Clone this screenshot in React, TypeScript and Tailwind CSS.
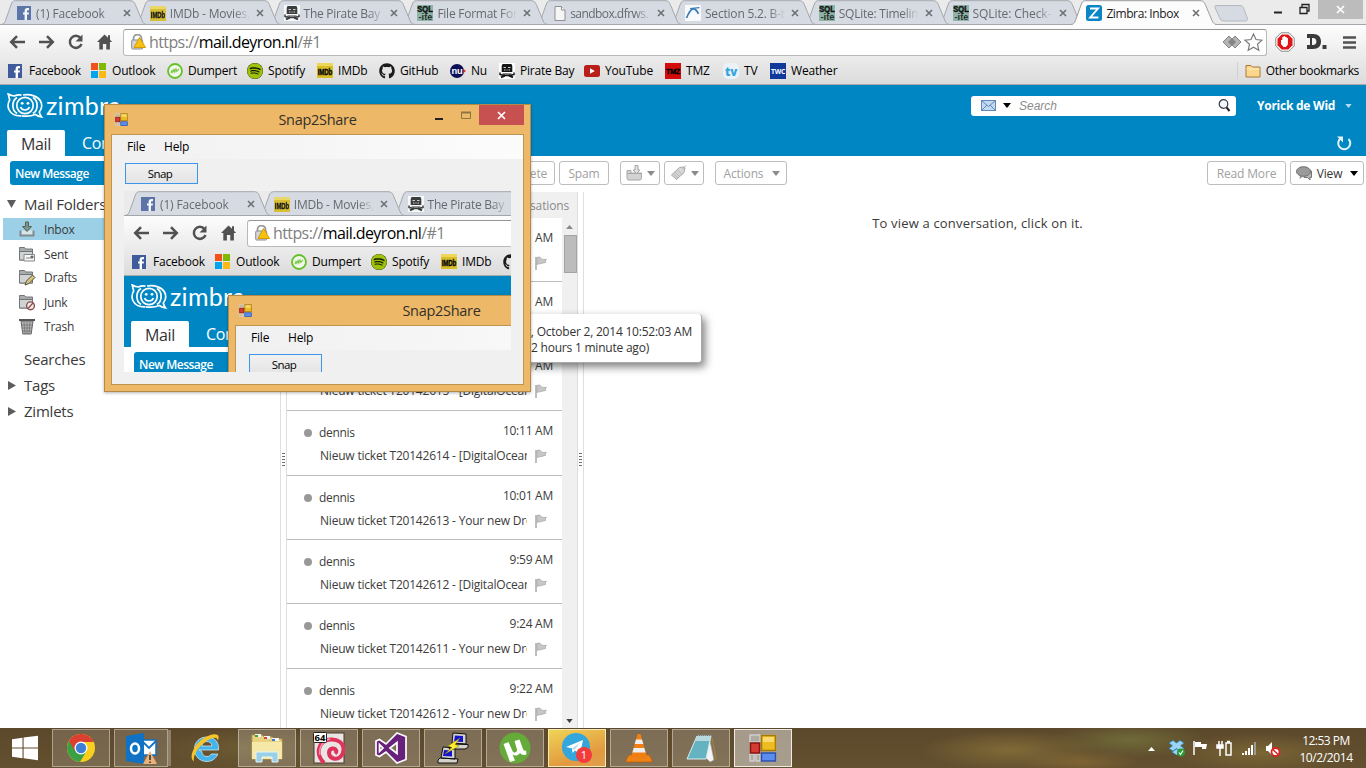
import React from "react";
import { FaGithub, FaSpotify } from "react-icons/fa";

type P = { className?: string };

const FacebookIcon = ({ className = "" }: P) => (
  <svg width="14" height="14" viewBox="0 0 14 14" className={className}>
    <rect width="14" height="14" fill="#3f5b9b" />
    <path d="M7.600 14V8.600H6V6.400h1.600V5c0-2 1-3 2.900-3h1.500v2.200H11c-.8 0-1 .3-1 1v1.200h2l-.3 2.200H10V14z" fill="#fff" />
  </svg>
);
const ImdbIcon = ({ className = "" }: P) => (
  <svg width="16" height="15" viewBox="0 0 16 15" className={className}>
    <rect width="16" height="15" fill="#d9bd24" />
    <rect width="16" height="3" fill="#ecd75a" />
    <text x="8" y="11.500" fontSize="8.500" fontWeight="900" textAnchor="middle" textLength="14.500" lengthAdjust="spacingAndGlyphs" fontFamily="Liberation Sans, sans-serif" stroke="#111" strokeWidth=".4">IMDb</text>
  </svg>
);
const PirateIcon = ({ className = "" }: P) => (
  <svg width="16" height="16" viewBox="0 0 16 16" className={className}>
    <rect width="16" height="16" fill="#fff" />
    <path d="M3.500 1h9l.8 2v6H2.700V3z" fill="#151515" />
    <path d="M4.500 4.500H7M9 4.500h2.500M5 7h1.500M7.500 7h1M9.500 7H11" stroke="#ccc" />
    <path d="M1 9.500v2c4 1.200 10 1.200 14 0v-2" stroke="#151515" strokeWidth="1.500" fill="none" />
    <path d="M3.500 10.500h9v1h-9z" fill="#151515" />
    <path d="M2 14.300l4-1.800M14 14.300l-4-1.800" stroke="#151515" strokeWidth="2" />
  </svg>
);
const SqliteIcon = () => (
  <svg width="16" height="16" viewBox="0 0 16 16">
    <rect width="16" height="16" fill="#8fb3a7" />
    <text x="8" y="7.300" fontSize="9" fontWeight="700" textAnchor="middle" textLength="15.500" lengthAdjust="spacingAndGlyphs" fontFamily="Liberation Sans, sans-serif" fill="#101412" stroke="#101412" strokeWidth=".5">SQL</text>
    <text x="8.500" y="15" fontSize="9.500" fontWeight="700" textAnchor="middle" textLength="14" lengthAdjust="spacingAndGlyphs" fontFamily="Liberation Sans, sans-serif" fill="#29342f">-ite</text>
  </svg>
);
const PageIcon = () => (
  <svg width="12" height="15" viewBox="0 0 12 15">
    <path d="M1 .5h6.500L11 4v10.500H1z" fill="#f5f5f5" stroke="#8d9095" />
    <path d="M7.500.5V4H11" fill="#fff" stroke="#8d9095" />
  </svg>
);
const SectionIcon = () => (
  <svg width="16" height="16" viewBox="0 0 16 16">
    <rect width="16" height="16" fill="#f7f9fb" />
    <path d="M1.500 13C3.500 8 5.500 3.800 8.500 3.800c2.500 0 3.500 2 5 5" fill="none" stroke="#3579b8" strokeWidth="1.700" />
    <path d="M5 3.500l9.500-.8" stroke="#3579b8" strokeWidth="1.200" />
  </svg>
);
const ZIcon = () => (
  <svg width="16" height="16" viewBox="0 0 16 16">
    <rect width="16" height="16" rx="2.500" fill="#0a86c5" />
    <path d="M4 3.500h8L4.200 12.500H12.400" stroke="#fff" strokeWidth="1.900" fill="none" />
  </svg>
);
const OutlookWin = () => (
  <svg width="15" height="15" viewBox="0 0 15 15">
    <path fill="#f2511b" d="M0 0h7v7H0z" /><path fill="#7fba00" d="M8 0h7v7H8z" />
    <path fill="#00a3ee" d="M0 8h7v7H0z" /><path fill="#fcb813" d="M8 8h7v7H8z" />
  </svg>
);
const DumpertIcon = () => (
  <svg width="16" height="16" viewBox="0 0 16 16">
    <circle cx="8" cy="8" r="7" fill="#f3f8ec" stroke="#66c02b" strokeWidth="1.800" />
    <path d="M4 10l1-2.500.8 1.800L7 6.500l.8 2.500L9 6l.8 2.400L12 5.800" fill="none" stroke="#7cc94a" strokeWidth="1.200" />
  </svg>
);
const SpotifyIcon = () => (
  <span className="relative flex size-4 items-center justify-center rounded-full bg-[#1a1a0a]">
    <FaSpotify size={16} color="#9cc30a" />
  </span>
);
const NuIcon = () => (
  <svg width="16" height="14" viewBox="0 0 16 14">
    <circle cx="7" cy="7" r="7" fill="#0d0f57" />
    <path d="M13.500 5l2.500 2-2.500 2z" fill="#e02b2b" />
    <text x="7" y="9.600" fontSize="8.500" fontWeight="700" textAnchor="middle" textLength="11" lengthAdjust="spacingAndGlyphs" fontFamily="Liberation Sans, sans-serif" fill="#fff">nu</text>
  </svg>
);
const YoutubeIcon = () => (
  <svg width="16" height="12" viewBox="0 0 16 12">
    <rect width="16" height="12" rx="2.500" fill="#b81f1a" />
    <path d="M6 3.300v5.400L10.800 6z" fill="#fff" />
  </svg>
);
const TmzIcon = () => (
  <svg width="16" height="16" viewBox="0 0 16 16">
    <rect width="16" height="16" fill="#d40b0b" />
    <text x="8" y="11" fontSize="7.500" fontWeight="900" textAnchor="middle" textLength="14" lengthAdjust="spacingAndGlyphs" fontFamily="Liberation Sans, sans-serif" stroke="#000" strokeWidth=".4">TMZ</text>
  </svg>
);
const TvIcon = () => (
  <svg width="16" height="16" viewBox="0 0 16 16">
    <rect width="16" height="16" rx="5" fill="#e9f2f7" />
    <text x="8" y="12.500" fontSize="12" fontWeight="800" textAnchor="middle" textLength="12" lengthAdjust="spacingAndGlyphs" fontFamily="Open Sans, sans-serif" fill="#35a3dc">tv</text>
  </svg>
);
const TwcIcon = () => (
  <svg width="16" height="16" viewBox="0 0 16 16">
    <rect width="16" height="16" fill="#11399c" />
    <text x="8" y="10.500" fontSize="7" fontWeight="700" textAnchor="middle" textLength="14" lengthAdjust="spacingAndGlyphs" fontFamily="Open Sans, sans-serif" fill="#fff">TWC</text>
  </svg>
);

const TabClose = () => (
  <svg width="8" height="8" viewBox="0 0 8 8"><path d="M1 1l6 6M7 1L1 7" stroke="#6d6f73" strokeWidth="1.600" /></svg>
);

type TabDef = { icon: React.ReactNode; title: string; active?: boolean; pad: string; label: string };
const TABS: TabDef[] = [
  { icon: <FacebookIcon className="opacity-80" />, title: "(1) Facebook", pad: "pl-[16px]", label: "tracking-[-0.15px]" },
  { icon: <ImdbIcon className="opacity-90" />, title: "IMDb - Movies,", pad: "pl-[15px]", label: "tracking-[-0.2px] pl-[1px]" },
  { icon: <PirateIcon className="opacity-80" />, title: "The Pirate Bay", pad: "pl-[15px]", label: "tracking-[-0.28px] pl-[1px]" },
  { icon: <SqliteIcon />, title: "File Format For", pad: "pl-[15px]", label: "tracking-[-0.25px] pl-[1px]" },
  { icon: <PageIcon />, title: "sandbox.dfrws.", pad: "pl-[18px]", label: "tracking-[-0.55px] -ml-[3px]" },
  { icon: <SectionIcon />, title: "Section 5.2. B-t", pad: "pl-[15px]", label: "tracking-[-0.2px] pl-[1px]" },
  { icon: <SqliteIcon />, title: "SQLite: Timelin", pad: "pl-[15px]", label: "tracking-[-0.25px] pl-[1px]" },
  { icon: <SqliteIcon />, title: "SQLite: Check-", pad: "pl-[15px]", label: "tracking-[-0.1px] pl-[1px]" },
  { icon: <ZIcon />, title: "Zimbra: Inbox", active: true, pad: "pl-[15px]", label: "tracking-[-0.4px] pl-[1px]" },
];
const Z = ["z-[9]", "z-[8]", "z-[7]", "z-[6]", "z-[5]", "z-[4]", "z-[3]", "z-[2]", "z-10"];

function Tab({ t, z }: { t: TabDef; z: string }) {
  return (
    <div className={`relative flex h-[25px] w-[133.8px] shrink-0 items-center pt-[1px] ${t.pad} ${z}`}>
      <svg className="absolute left-0 top-0" width="149" height="25" viewBox="0 0 149 25">
        <path
          d="M0 24.500C3 24 3.500 23 4.500 20.500L10 5C11.200 1.800 12 .7 14.500.7H129C132 .7 133 1.800 134.300 4.500L141 20.500C142 23 143 24.300 146 24.500"
          fill={t.active ? "#fcfcfc" : "#d6dbe3"}
          stroke={t.active ? "#9a9ca0" : "#a3a7ad"}
        />
        {!t.active && <path d="M0 24.500H149" stroke="#a3a6ab" />}
        {t.active && <path d="M2 24.500H144" stroke="#fcfcfc" strokeWidth="1.500" />}
      </svg>
      <span className="relative z-10 flex w-[19px] shrink-0">{t.icon}</span>
      <span
        className={`relative z-10 w-[83px] shrink-0 overflow-hidden whitespace-nowrap text-[12px] ${t.label} ${
          t.active ? "text-[#1a1a1a]" : "text-[#66696f] [mask-image:linear-gradient(to_right,#000_78%,transparent_98%)]"
        }`}
      >
        {t.title}
      </span>
      <span className="relative z-10 ml-[4px]"><TabClose /></span>
    </div>
  );
}

const BOOKMARKS: { icon: React.ReactNode; label: string; w: string }[] = [
  { icon: <FacebookIcon />, label: "Facebook", w: "w-[83px]" },
  { icon: <OutlookWin />, label: "Outlook", w: "w-[76px]" },
  { icon: <DumpertIcon />, label: "Dumpert", w: "w-[80px]" },
  { icon: <SpotifyIcon />, label: "Spotify", w: "w-[70px]" },
  { icon: <ImdbIcon />, label: "IMDb", w: "w-[62px]" },
  { icon: <FaGithub size={16} color="#1b1b1b" />, label: "GitHub", w: "w-[71px]" },
  { icon: <NuIcon />, label: "Nu", w: "w-[49px]" },
  { icon: <PirateIcon />, label: "Pirate Bay", w: "w-[85px]" },
  { icon: <YoutubeIcon />, label: "YouTube", w: "w-[81px]" },
  { icon: <TmzIcon />, label: "TMZ", w: "w-[58px]" },
  { icon: <TvIcon />, label: "TV", w: "w-[47px]" },
  { icon: <TwcIcon />, label: "Weather", w: "w-[90px]" },
];

function Chrome({ nested }: { nested: boolean }) {
  const tabs = nested ? TABS.slice(0, 3) : TABS;
  const marks = nested ? BOOKMARKS.slice(0, 6) : BOOKMARKS;
  return (
    <div className="flex h-[85px] flex-col border-b border-[#a9a9a9] bg-[linear-gradient(#fdfdfd_25px,#dcdcdc_84px)]">
      <div className="relative flex h-[25px] bg-[#ebebeb] pl-[1px] shadow-[inset_0_-1px_0_#a3a6ab]">
        {tabs.map((t, i) => <Tab key={i} t={t} z={Z[i]} />)}
        {!nested && (
          <>
            <svg className="ml-[9px] mt-[5px] shrink-0" width="34" height="17" viewBox="0 0 34 17">
              <path d="M2 .5h24c2 0 3 1 3.800 3l3.400 9.500c.8 2.200 0 3-2 3H10c-2.500 0-3.500-1-4.500-3.500L1.200 3C.5 1.200.8.5 2 .5z" fill="#d6dbe3" stroke="#b3b8bf" />
            </svg>
            <svg className="ml-auto mt-[3px] shrink-0" width="38" height="14" viewBox="0 0 38 14">
              <path d="M1 9.500h8" stroke="#222" strokeWidth="2" />
              <path d="M27 4.500h7v6h-7zM29 4V1.500h7V8h-2" fill="none" stroke="#222" strokeWidth="1.300" />
            </svg>
            <div className="ml-[7px] mr-[3px] flex h-[19px] w-[45px] shrink-0 items-center justify-center bg-[#bcbcbc]">
              <svg width="9" height="9" viewBox="0 0 9 9"><path d="M1 1l7 7M8 1L1 8" stroke="#fff" strokeWidth="1.700" /></svg>
            </div>
          </>
        )}
      </div>
      <div className="flex h-[32px] items-center">
        <svg className="ml-[8px] mt-[2px] shrink-0" width="106" height="18" viewBox="0 0 106 18">
          <g fill="none" stroke="#515151" strokeWidth="2.500">
            <path d="M17 9H4M9 3.200L3.200 9 9 14.800" />
            <path d="M31 9h13M39 3.200L44.800 9 39 14.800" />
            <path d="M72.500 5A6 6 0 1 0 73.500 11" />
          </g>
          <path d="M74.500 1.500v7h-7z" fill="#515151" />
          <path d="M96.500 1.500L89 9h2.300v7.500h3.600V11h3.400v5.500h3.600V9h2.300l-2.200-2.300V2.200h-2v2.500z" fill="#515151" />
        </svg>
        <div className="ml-[9px] mt-[2px] flex h-[27px] w-[1144px] items-center rounded-[3px] border border-[#b9b9b9] border-t-[#959595] bg-white">
          <svg className="ml-[7px] shrink-0" width="15" height="16" viewBox="0 0 15 16">
            <path d="M2.500 7V4.500a4 4 0 0 1 8 0V7" fill="none" stroke="#9b9b9b" strokeWidth="1.800" />
            <rect x=".7" y="6" width="11" height="9" rx="1" fill="#d5d5d5" stroke="#8d8d8d" />
            <path d="M8.500 3.500L14.500 13.500H3z" fill="#f6c20f" stroke="#d69a08" strokeLinejoin="round" />
          </svg>
          <span className="ml-[3px] whitespace-nowrap text-[16px] leading-none tracking-[-0.6px] text-[#808080]">
            https://<span className="text-black">mail.deyron.nl</span>/#1
          </span>
          {!nested && (
            <svg className="ml-auto mr-[3px] shrink-0" width="41" height="20" viewBox="0 0 41 20">
              <path d="M7 4L1 10l6 6 6-6zM13 4l6 6-6 6-6-6z" fill="#b4b4b4" stroke="#858585" />
              <path d="M10 6l4 4-4 4-4-4z" fill="#858585" />
              <path d="M31.500 2l2.500 5.500 6 .7-4.500 4 1.300 6-5.300-3-5.300 3 1.300-6-4.500-4 6-.7z" fill="#fff" stroke="#7b7b7b" strokeWidth="1.200" />
            </svg>
          )}
        </div>
        {!nested && (
          <div className="mt-[2px] flex items-center">
            <svg className="ml-[8px]" width="20" height="20" viewBox="0 0 20 20">
              <path d="M6 .8h8L19.200 6v8L14 19.200H6L.8 14V6z" fill="#fff" stroke="#888" />
              <path d="M6.700 2.500h6.600l4.200 4.200v6.600l-4.200 4.200H6.700l-4.200-4.200V6.700z" fill="#e01518" />
              <path d="M6 8h1.300V5h1.400V4h1.500v1h1.400v1h1.300v6.500l-2 2.500H8.500L6 12z" fill="#fff" />
            </svg>
            <svg className="ml-[12px]" width="20" height="16" viewBox="0 0 20 16">
              <path d="M0 0h6c5.500 0 8 3 8 7.500S11.500 15 6 15H0V11h3V4H0zM5 4v7h1c2 0 3.400-1 3.400-3.500S8 4 6 4z" fill="#3a3a3a" fillRule="evenodd" />
              <path d="M15.500 11h4v4h-4z" fill="#3a3a3a" />
            </svg>
            <svg className="ml-[16px]" width="13" height="13" viewBox="0 0 13 13">
              <path d="M0 1.500h13M0 6.500h13M0 11.500h13" stroke="#515151" strokeWidth="2.600" />
            </svg>
          </div>
        )}
      </div>
      <div className="flex h-[27px] items-center pl-[8px] text-[12px] tracking-[-0.2px] text-black">
        {marks.map((b, i) => (
          <div key={i} className={`flex shrink-0 items-center ${b.w}`}>
            <span className="flex w-[21px]">{b.icon}</span>
            <span className="whitespace-nowrap">{b.label}</span>
          </div>
        ))}
        {!nested && (
          <div className="ml-auto flex items-center border-l border-[#cdd0d3] pl-[7px] pr-[7px]">
            <svg width="16" height="14" viewBox="0 0 16 14">
              <path d="M1 3V1.500h5L7.500 3H15v10H1z" fill="#fbd78e" stroke="#a8793a" />
              <path d="M1.500 5h13" stroke="#fdebbf" />
            </svg>
            <span className="ml-[5px] whitespace-nowrap tracking-[-0.35px]">Other bookmarks</span>
          </div>
        )}
      </div>
    </div>
  );
}

const ZimbraLogo = () => (
  <svg width="37" height="26" viewBox="0 0 37 26" fill="none" stroke="#fff" strokeWidth="1.700">
    <circle cx="18" cy="12.500" r="8.200" />
    <path d="M14.500 2.200C12 1.600 9.500 2 7.500 3 5.500 2.800 3 2 1.200.9c.8 2.400.8 4 1.500 6-1.800 3-2.200 6.300-.8 9.600 2 4.300 6.500 6.600 12.500 6.300" />
    <path d="M16 2C24 .8 31 3.500 33.500 8c2 4 1.300 8-1.200 11 .4 1.800 1 3.500 2.200 5-2.700-.3-4.500-1.200-6.200-2.500-4 1.700-8.500 2-13.500 1.300" />
    <path d="M10 4.500C4.500 8 4.500 17 10 20.500M26 4.500c5.500 3.500 5.500 12.500 0 16" />
    <circle cx="15.200" cy="10.300" r="1.400" fill="#fff" stroke="none" /><circle cx="21" cy="10.300" r="1.400" fill="#fff" stroke="none" />
    <path d="M13.500 14c1.500 4 7.500 4 9 0" />
  </svg>
);

const Caret = ({ className = "" }: P) => (
  <svg className={className} width="8" height="5" viewBox="0 0 8 5"><path d="M0 0h8L4 5z" fill="currentColor" /></svg>
);

function Header({ nested }: { nested: boolean }) {
  return (
    <div className="flex h-[71px] flex-col justify-between bg-[#0087c3] text-white">
      <div className="flex h-[41px] items-center">
        <div className="ml-[7px]"><ZimbraLogo /></div>
        <span className="-mt-[1px] ml-[2px] font-['Lato',sans-serif] text-[25px] leading-none tracking-[0.3px]">zimbra</span>
        {!nested && (
          <>
            <div className="ml-auto flex h-[20px] w-[265px] items-center rounded-[3px] bg-white">
              <svg className="ml-[10px]" width="15" height="11" viewBox="0 0 15 11">
                <rect x=".5" y=".5" width="14" height="10" fill="#c4d8f0" stroke="#5f88bd" />
                <path d="M1 1l6.500 5.500L14 1M1 10l5-5M14 10L9 5" fill="none" stroke="#5f88bd" />
              </svg>
              <Caret className="ml-[7px] text-black" />
              <span className="ml-[8px] font-['Liberation_Sans',sans-serif] text-[12px] italic text-[#8c8c8c]">Search</span>
              <svg className="ml-auto mr-[5px]" width="13" height="14" viewBox="0 0 13 14">
                <circle cx="5.500" cy="5" r="4.300" fill="#f4f8fc" stroke="#333a48" strokeWidth="1.200" />
                <path d="M8.500 8.300l3 3.700" stroke="#222" strokeWidth="2" />
              </svg>
            </div>
            <span className="ml-[21px] w-[80px] whitespace-nowrap text-[12px] font-bold tracking-[-0.25px]">Yorick de Wid</span>
            <Caret className="ml-[8px] mr-[14px] h-[4px] w-[7px] text-[#b4dcf0]" />
          </>
        )}
      </div>
      <div className="flex h-[26px] items-center">
        <div className="ml-[7px] flex h-[26px] w-[58px] items-center justify-center rounded-t-[2px] bg-white pt-[2px] text-[16px] tracking-[-0.3px] text-[#333]">Mail</div>
        <span className="ml-[17px] text-[16px] tracking-[-0.3px]">Contacts</span>
        {!nested && (
          <svg className="ml-auto mr-[14px]" width="16" height="16" viewBox="0 0 16 16">
            <path d="M4.500 3.500A6 6 0 1 0 12.500 4" fill="none" stroke="#e4f3fa" strokeWidth="2" />
            <path d="M1 1.500h6v6z" fill="#e4f3fa" />
          </svg>
        )}
      </div>
    </div>
  );
}

const Btn = ({ className = "", children }: P & { children: React.ReactNode }) => (
  <div className={`flex h-[24px] shrink-0 items-center justify-center whitespace-nowrap rounded-[3px] border border-[#bdbdbd] bg-white text-[12px] tracking-[-0.15px] ${className}`}>
    {children}
  </div>
);

function ActionBar({ nested }: { nested: boolean }) {
  return (
    <div className="flex h-[36px] shrink-0 items-start bg-white pt-[5px]">
      <div className="ml-[10px] flex h-[24px] w-[165px] shrink-0 items-center rounded-[3px] bg-[#0087c3] pl-[5px] text-[12px] font-semibold tracking-[-0.5px] text-white">New Message</div>
      {!nested && (
        <>
          <Btn className="ml-[329px] w-[51px] text-[#a0a0a0]">Delete</Btn>
          <Btn className="ml-[4px] w-[50px] text-[#a0a0a0]">Spam</Btn>
          <Btn className="ml-[11px] w-[40px] gap-[4px]">
            <svg width="17" height="16" viewBox="0 0 17 16">
              <path d="M1 5.500h4V8h10.500v5.500l-1 1.500H2l-1-1.500z" fill="#d3d3d3" stroke="#a6a6a6" />
              <path d="M1 8.500h14.500" stroke="#a6a6a6" />
              <path d="M9 .5h3V5h2L10.500 8.500 7 5h2z" fill="#e2e2e2" stroke="#a6a6a6" />
            </svg>
            <Caret className="text-[#8b8b8b]" />
          </Btn>
          <Btn className="ml-[4px] w-[40px] gap-[4px]">
            <svg width="17" height="16" viewBox="0 0 17 16">
              <path d="M1.500 10L9.500 2.500l4-.5 1.500 1-1 4.500-7.500 7z" fill="#d8d8d8" stroke="#a6a6a6" />
              <path d="M5 7l5 4.500M7.500 5l4.500 4.500M3.500 9l4.500 4" stroke="#b2b2b2" />
              <path d="M12.500 4L16 .5" stroke="#a6a6a6" />
            </svg>
            <Caret className="text-[#8b8b8b]" />
          </Btn>
          <Btn className="ml-[11px] w-[72px] gap-[9px] pl-[2px] text-[#a0a0a0]">Actions <Caret className="text-[#8b8b8b]" /></Btn>
          <Btn className="ml-auto w-[79px] text-[#a0a0a0]">Read More</Btn>
          <Btn className="ml-[4px] mr-[2px] w-[74px] text-[#333]">
            <svg width="17" height="15" viewBox="0 0 17 15">
              <path d="M8 5h7.500v6.500L14 11v3l-2.500-2.500H8z" fill="#b9b9b9" stroke="#777" />
              <ellipse cx="7.500" cy="5.500" rx="7" ry="4.800" fill="#9a9a9a" stroke="#6d6d6d" />
              <path d="M4 9.500L3.500 13l4-3z" fill="#888" />
            </svg>
            <span className="ml-[4px]">View</span>
            <Caret className="ml-[8px] text-black" />
          </Btn>
        </>
      )}
    </div>
  );
}

const Folder = ({ children }: { children?: React.ReactNode }) => (
  <svg width="18" height="17" viewBox="0 0 18 17">
    <path d="M1.500 3.500V1.500h5l1 1.500h7v11h-13z" fill="#a9acad" stroke="#717476" />
    <path d="M1.500 14V5.500h13V14z" fill="#d0d3d4" stroke="#717476" />
    {children}
  </svg>
);
const FOLDERS = [
  {
    name: "Inbox", row: "h-[22px] bg-[#9bd0e7]",
    icon: (
      <svg width="18" height="16" viewBox="0 0 18 16">
        <path d="M2.500 9.500v5h13v-5" fill="#d8e4e8" stroke="#7e8c92" strokeWidth="2" />
        <path d="M7.500 1h3v4.500h3L9 10.500 4.500 5.500h3z" fill="#7d9486" stroke="#50655a" />
      </svg>
    ),
  },
  { name: "Sent", row: "mt-[3px] h-[22px]", icon: <Folder><path d="M6 8.500h10.500V15H6z" fill="#f6f6f6" stroke="#888" /><path d="M8 12h5M13 10h2v2h-2z" stroke="#888" /></Folder> },
  { name: "Drafts", row: "h-[25px]", icon: <Folder><path d="M7 16l1.500-4 6-6 2.500 2.500-6 6z" fill="#d9c27e" stroke="#55503c" /></Folder> },
  { name: "Junk", row: "h-[24px]", icon: <Folder><circle cx="12.500" cy="11.800" r="3.900" fill="#f3eded" stroke="#8b4d4d" strokeWidth="1.400" /><path d="M10 14.500l5-5.500" stroke="#8b4d4d" strokeWidth="1.300" /></Folder> },
  {
    name: "Trash", row: "h-[25px]",
    icon: (
      <svg width="18" height="17" viewBox="0 0 18 17">
        <path d="M3 3l1.800 13h8.400L15 3z" fill="#b3b3b3" stroke="#666" />
        <path d="M1 2h16" stroke="#555" strokeWidth="2" />
        <path d="M6 4l1 12M9 4v12M12 4l-1 12M3.500 7h11M4 10h10M4.500 13h9" stroke="#737373" strokeWidth=".8" />
      </svg>
    ),
  },
];

const Heading = ({ label, arrow, className = "" }: { label: string; arrow?: string; className?: string }) => (
  <div className={`flex items-center text-[15px] tracking-[-0.22px] text-[#3a3a3a] ${className}`}>
    <span className="flex w-[24px] pl-[7px]">
      {arrow === "down" && <svg width="9" height="8" viewBox="0 0 9 8"><path d="M0 0h9L4.500 8z" fill="#5c5c5c" /></svg>}
      {arrow === "right" && <svg width="9" height="9" viewBox="0 0 9 9"><path d="M1 0v9l8-4.500z" fill="#5c5c5c" /></svg>}
    </span>
    {label}
  </div>
);

const Sidebar = () => (
  <div className="w-[280px] shrink-0">
    <Heading label="Mail Folders" arrow="down" className="mb-[3px] h-[23px]" />
    {FOLDERS.map((f) => (
      <div key={f.name} className={`ml-[3px] flex items-center text-[12px] tracking-[-0.2px] text-[#3a3a3a] ${f.row}`}>
        <span className="ml-[15px] flex w-[26px]">{f.icon}</span>
        {f.name}
      </div>
    ))}
    <Heading label="Searches" className="mt-[7px] h-[26px]" />
    <Heading label="Tags" arrow="right" className="h-[26px]" />
    <Heading label="Zimlets" arrow="right" className="h-[26px]" />
  </div>
);

const Splitter = () => (
  <div className="flex w-[7px] shrink-0 flex-col items-center border-x border-[#dedede] bg-white">
    <svg className="mt-[261px]" width="3" height="14" viewBox="0 0 3 14">
      <path d="M0 .5h3M0 3.500h3M0 6.500h3M0 9.500h3M0 12.500h3" stroke="#6f6f6f" />
    </svg>
  </div>
);

const ROWS = [
  { time: "AM", h: "h-[64px]" },
  { time: "AM", h: "h-[64px]" },
  { time: "AM", subject: "Nieuw ticket T20142615 - [DigitalOcean]", h: "h-[65px]" },
  { from: "dennis", time: "10:11 AM", subject: "Nieuw ticket T20142614 - [DigitalOcean]", h: "h-[65px]" },
  { from: "dennis", time: "10:01 AM", subject: "Nieuw ticket T20142613 - Your new Droplet", h: "h-[64px]" },
  { from: "dennis", time: "9:59 AM", subject: "Nieuw ticket T20142612 - [DigitalOcean]", h: "h-[64px]" },
  { from: "dennis", time: "9:24 AM", subject: "Nieuw ticket T20142611 - Your new Droplet", h: "h-[65px]" },
  { from: "dennis", time: "9:22 AM", subject: "Nieuw ticket T20142612 - Your new Droplet", h: "h-[59px] border-b-0" },
];

const MessageList = () => (
  <div className="flex w-[290px] shrink-0 flex-col">
    <div className="flex h-[26px] items-center justify-end bg-[#f0f0f0] pr-[8px] text-[12px] tracking-[-0.15px] text-[#8a8a8a]">Conversations</div>
    <div className="flex">
      <div className="w-[275px]">
        {ROWS.map((r, i) => (
          <div key={i} className={`flex flex-col overflow-hidden border-b border-[#bcbcbc] text-[12px] leading-[18px] text-[#3c3c3c] ${r.h}`}>
            <div className="flex h-[31px] shrink-0 items-start pt-[11px]">
              <span className="ml-[17px] mt-[7px] size-[8px] rounded-full bg-[#989898]" />
              <span className="ml-[7px] mt-[2px] tracking-[-0.3px]">{r.from}</span>
              <span className="ml-auto mr-[9px] tracking-[-0.25px]">{r.time}</span>
            </div>
            <div className="mt-[5px] flex h-[18px] shrink-0 items-center">
              <span className="ml-[33px] w-[207px] overflow-hidden whitespace-nowrap tracking-[-0.2px]">{r.subject}</span>
              <svg className="ml-[8px]" width="12" height="15" viewBox="0 0 12 15">
                <path d="M1 1v13" stroke="#a9a9a9" strokeWidth="1.500" />
                <path d="M2 1.500c1.500-.8 3-.5 4 .7 0 1 1.500 1.300 5.500 1.200-1.500 1-1.200 2-.7 2.800-1.800.8-3.300.8-4.300 1.300-1.500.3-3 .3-4.500.9z" fill="#c6c6c6" stroke="#a9a9a9" strokeWidth=".8" />
              </svg>
            </div>
          </div>
        ))}
      </div>
      <div className="flex h-[510px] w-[15px] flex-col items-center bg-[#f0f0f0]">
        <svg className="mt-[7px]" width="7" height="4" viewBox="0 0 7 4"><path d="M0 4h7L3.500 0z" fill="#8b8b8b" /></svg>
        <div className="ml-[2px] mt-[6px] h-[38px] w-[13px] border border-[#a3a3a3] bg-[#bcbcbc]" />
        <Caret className="mb-[5px] mt-auto h-[4px] w-[7px] text-[#404040]" />
      </div>
    </div>
  </div>
);

const FormsIcon = ({ size = 13 }: { size?: number }) => (
  <svg width={size} height={size} viewBox="0 0 28 28">
    <rect x="0" y="0" width="28" height="28" fill="#b5b5b5" opacity=".55" />
    <path d="M1 1h10v7H1zM1 20h4v7H1zM7 20h4v7H7z" fill="none" stroke="#ddd" />
    <rect x="12.500" y="1.500" width="14" height="15" fill="#eebb22" stroke="#a97a00" strokeWidth="1.500" />
    <rect x="14" y="3" width="11" height="5" fill="#f8da70" />
    <rect x="1.500" y="9" width="9" height="10" fill="#d63b33" stroke="#8c1512" strokeWidth="1.500" />
    <rect x="12.500" y="19" width="14" height="8" fill="#5b8cf0" stroke="#2b50a8" strokeWidth="1.500" />
  </svg>
);

function SnapWindow({ nested }: { nested: boolean }) {
  return (
    <div className="absolute left-[104px] top-[104px] z-20 flex h-[288px] w-[427px] flex-col border border-[#b48a48] bg-[#edb867] shadow-[0_1px_3px_rgba(0,0,0,0.3)]">
      <div className="flex h-[29px] shrink-0 items-start">
        <div className="ml-[10px] mt-[8px] w-[20px]"><FormsIcon /></div>
        <div className="flex h-[28px] grow items-center justify-center pl-[65px] text-[14.500px] tracking-[-0.3px] text-[#33302a]">Snap2Share</div>
        <svg className="mt-[6px]" width="44" height="10" viewBox="0 0 44 10">
          <path d="M0 8h8" stroke="#222" strokeWidth="2" />
          <path d="M26.500 1.500h9v6h-9z" fill="none" stroke="#8f7444" /><path d="M26 1.500h10" stroke="#8f7444" strokeWidth="2" />
        </svg>
        <div className="mr-[6px] flex h-[20px] w-[45px] items-center justify-center bg-[#c75050]">
          <svg width="9" height="9" viewBox="0 0 9 9"><path d="M1 1l7 7M8 1L1 8" stroke="#fff" strokeWidth="1.700" /></svg>
        </div>
      </div>
      <div className="mx-[6px] flex h-[251px] flex-col border border-[#bd9450] bg-[#f0f0f0]">
        <div className="flex h-[24px] shrink-0 items-center bg-[linear-gradient(to_right,#f0f0f0,#fcfcfc)] pb-[1px] text-[12px] tracking-[-0.2px] text-black">
          <span className="ml-[15px] w-[37px]">File</span>
          <span>Help</span>
        </div>
        <div className="ml-[13px] mt-[4px] flex h-[21px] w-[73px] shrink-0 items-center justify-center border border-[#3c96ee] bg-[linear-gradient(#f1f1f1,#e4e4e4)] pr-[3px] text-[11.500px] tracking-[-0.55px] text-black">Snap</div>
        <div className="ml-[12px] mt-[7px] h-[181px] w-[387px] shrink-0 overflow-hidden">
          {!nested && <Scene nested />}
        </div>
      </div>
    </div>
  );
}

function Scene({ nested = false }: { nested?: boolean }) {
  return (
    <div className={`relative flex flex-col overflow-hidden bg-white ${nested ? "h-[288px] w-[1366px]" : "h-[728px] w-[1366px]"}`}>
      <Chrome nested={nested} />
      <Header nested={nested} />
      <ActionBar nested={nested} />
      {!nested && (
        <div className="flex h-[536px] shrink-0">
          <Sidebar />
          <Splitter />
          <MessageList />
          <Splitter />
          <div className="grow pl-[5px] pt-[22px] text-center text-[13px] tracking-[0.18px] text-[#3a3a3a]">To view a conversation, click on it.</div>
        </div>
      )}
      {!nested && (
        <div className="absolute left-[450px] top-[314px] z-10 flex h-[49px] w-[252px] flex-col items-end justify-center rounded-[3px] border-r border-b border-[#aaa] bg-white pt-[4px] text-[12px] leading-[16px] tracking-[-0.22px] text-[#333] shadow-[3px_4px_8px_rgba(0,0,0,0.5)]">
          <span className="whitespace-nowrap pr-[9px]">Thursday, October 2, 2014 10:52:03 AM</span>
          <span className="whitespace-nowrap pr-[52px]">(2 hours 1 minute ago)</span>
        </div>
      )}
      <SnapWindow nested={nested} />
    </div>
  );
}

const TASKS: { cls: string; icon: React.ReactNode }[] = [
  {
    cls: "w-[58px] border-white/40 bg-white/15 ml-[2px]",
    icon: (
      <svg width="28" height="28" viewBox="0 0 28 28">
        <circle cx="14" cy="14" r="14" fill="#f9cf1d" />
        <path d="M1.900 7A14 14 0 0 0 13 28l6.500-11z" fill="#3aa043" />
        <path d="M1.900 7l6 10L14 8h12.600A14 14 0 0 0 1.900 7z" fill="#dc3f32" />
        <circle cx="14" cy="14" r="6.500" fill="#fff" /><circle cx="14" cy="14" r="5.200" fill="#3c7fd4" />
      </svg>
    ),
  },
  {
    cls: "w-[54px] mr-[4px] border-white/40 bg-white/15 ml-[4px] shadow-[4px_0_0_-1px_#8e8068]",
    icon: (
      <svg width="31" height="31" viewBox="0 0 31 31">
        <path d="M15 7h15v15H15z" fill="#fff" stroke="#0f72c4" strokeWidth="1.500" /><path d="M16 8l7 7 7-7" stroke="#0f72c4" strokeWidth="1.800" fill="none" />
        <path d="M0 3l18-3v31L0 28z" fill="#0f72c4" />
        <ellipse cx="9" cy="15.500" rx="4" ry="5" fill="none" stroke="#fff" strokeWidth="2.500" />
        <path d="M24 18l7 13H17z" fill="#eab178" /><path d="M24 22v5M24 28.500v1.500" stroke="#444" strokeWidth="1.800" />
      </svg>
    ),
  },
  {
    cls: "w-[58px] border-transparent ml-[4px]",
    icon: (
      <svg width="30" height="30" viewBox="0 0 30 30">
        <path d="M9 17h19.500c.8-8-4-13-11.500-13S4.500 9 4.500 16 9.500 28.500 17 28.500c5 0 9-3 10.800-7.500h-6.500c-1 1.700-2.500 2.500-4.300 2.500-3 0-5-2-5.200-5zM11.800 13c.5-2.700 2.500-4.500 5.200-4.500s4.800 1.800 5 4.500z" fill="#43b5ec" stroke="#dff3fd" strokeWidth=".7" fillRule="evenodd" />
        <path d="M4 28.500C-2 25 4 11 14 5 21 .5 28 0 28.500 3.500c.2 1.300 0 2.800-.8 4.300 0-3.500-3-3.800-8-1.500C11 10 2 22 4 28.500z" fill="#f7c52b" />
      </svg>
    ),
  },
  {
    cls: "w-[58px] border-white/40 bg-white/20 ml-[4px]",
    icon: (
      <svg width="32" height="30" viewBox="0 0 32 30">
        <path d="M1 2h10l2 2h8l2 2h8v20H1z" fill="#e8d281" stroke="#b99c48" />
        <path d="M4 1h6v3H4zM13 3h6v3h-6zM21 5h7v3h-7z" fill="#f6f6f6" /><path d="M4 2h3v2H4z" fill="#3ba33c" /><path d="M13 4h3v2h-3z" fill="#d84a35" /><path d="M21 6h3v2h-3z" fill="#3c79cd" />
        <path d="M1 9h30v17H1z" fill="#f6e9a7" />
        <path d="M5 29V19h22v10h-6v-5H11v5z" fill="#9bcfe6" stroke="#e3f5fb" />
      </svg>
    ),
  },
  {
    cls: "w-[58px] border-white/40 bg-white/20 ml-[4px]",
    icon: (
      <svg width="32" height="32" viewBox="0 0 32 32">
        <rect x="1" y="1" width="30" height="30" fill="#e9e5e3" stroke="#4b3b30" />
        <path d="M11 31C2 22 5 9 17 7.500c8-.8 13.500 3.500 13.500 10C30.500 24 25 28 20.500 26.500 15 25 14.500 17.500 19.500 16.500c3.500-.5 5 3 2.500 5" fill="none" stroke="#e0335c" strokeWidth="4" />
        <path d="M7 23C5.500 15 10 8.500 17 7" stroke="#ff9caf" strokeWidth="1.300" fill="none" />
        <rect x=".5" y=".5" width="13" height="10" rx="1" fill="#fff" stroke="#222" /><text x="7" y="9" fontSize="9.500" fontWeight="700" textAnchor="middle" fontFamily="Open Sans, sans-serif">64</text>
      </svg>
    ),
  },
  {
    cls: "w-[58px] border-white/40 bg-white/20 ml-[4px]",
    icon: (
      <svg width="32" height="32" viewBox="0 0 32 32">
        <path d="M22 1l9 3.500v23L22 31 11 20l-6.500 4.500L1 23V9l3.500-1.500L11 12zM4.500 12.500v7L8 16zM15 16l7 5.500v-11z" fill="#68217a" stroke="#fff" strokeWidth="1.700" fillRule="evenodd" />
      </svg>
    ),
  },
  {
    cls: "w-[58px] border-white/40 bg-white/20 ml-[4px]",
    icon: (
      <svg width="32" height="32" viewBox="0 0 32 32">
        <g stroke="#111" fill="#d3d3cb"><path d="M16 1l13 1v10l-14-1zM14 12l17 .5v3L28 17H12zM6 15l12 1v11L4 26zM3 26l18 1-1 4H1v-3z" /></g>
        <path d="M18 3.500l8 .5v6l-9-.500zM7 18l8 .5v6L6 24z" fill="#1414cc" />
        <path d="M23 6L11 14l4 1.500L8 22l14-8-4-1.500z" fill="#ffee2e" stroke="#8b7b00" strokeWidth=".5" />
      </svg>
    ),
  },
  {
    cls: "w-[58px] border-white/40 bg-white/20 ml-[4px]",
    icon: (
      <svg width="32" height="32" viewBox="0 0 32 32">
        <circle cx="16" cy="16" r="15.500" fill="#65ab39" />
        <path d="M4.500 12l5-2 4 9c1 2.500 5 2 4.500-1.500L15.500 9l5-1.500 3.500 9.500c.5 1.500 1.500 2 3 1.500l.5 4c-2.500 1-5 .5-6.500-1.500-1.500 2.500-5 3.500-7.500 1.500l2.500 6-5 1.500z" fill="#fff" />
      </svg>
    ),
  },
  {
    cls: "w-[58px] border-[#f7e9b8] bg-[linear-gradient(160deg,#efd455,#e29940_70%,#dfa04e)] ml-[4px]",
    icon: (
      <svg width="32" height="32" viewBox="0 0 32 32">
        <circle cx="15" cy="15" r="14" fill="#33a6db" />
        <path d="M5 15l17-7-3 14-5-3.500-2.500 2.500-.5-4.500z" fill="#fff" /><path d="M11 16.500l8-6-5.500 7.500z" fill="#b9dcec" />
        <circle cx="23" cy="23" r="8" fill="#f43b3b" />
        <text x="23" y="27" fontSize="11" textAnchor="middle" fontFamily="Open Sans, sans-serif" fill="#fff">1</text>
      </svg>
    ),
  },
  {
    cls: "w-[58px] border-white/40 bg-white/20 ml-[4px]",
    icon: (
      <svg width="28" height="32" viewBox="0 0 28 32">
        <path d="M4 23h20l3 5v2H1v-2z" fill="#ee8318" stroke="#b85d08" strokeWidth=".7" />
        <path d="M12.500 2h3L22 25c-2 2.500-14 2.500-16 0z" fill="#f07f13" />
        <path d="M11 7.500h6l1.300 4.500H9.700zM8.700 16h10.600l1.300 4.500H7.400z" fill="#eee" />
      </svg>
    ),
  },
  {
    cls: "w-[58px] border-white/40 bg-white/20 ml-[4px]",
    icon: (
      <svg width="32" height="30" viewBox="0 0 32 30">
        <path d="M24 3l5 24-4 2-7-7z" fill="#f3f3f3" stroke="#999" strokeWidth=".6" /><path d="M27 5l4 20-2 2" stroke="#9d7b42" strokeWidth="1.500" fill="none" />
        <path d="M12 3h14l-5 23H2z" fill="#65b3c1" stroke="#d6edf0" />
        <path d="M12 3h14l-1 5H9.500z" fill="#b7dae0" />
        <path d="M12 2h15" stroke="#777" strokeWidth="2" strokeDasharray="1 1" />
      </svg>
    ),
  },
  { cls: "w-[58px] border-white/80 bg-white/45 ml-[4px]", icon: <FormsIcon size={28} /> },
];

const Taskbar = () => (
  <div className="flex h-[40px] w-[1366px] items-center bg-[radial-gradient(ellipse_90px_20px_at_1010px_22px,#806a37,transparent),radial-gradient(ellipse_80px_18px_at_1130px_12px,#6f6a39,transparent),radial-gradient(ellipse_90px_20px_at_1260px_25px,#7b6635,transparent),radial-gradient(ellipse_60px_12px_at_1080px_34px,#7f6433,transparent),radial-gradient(ellipse_90px_20px_at_250px_20px,#6d5c33,transparent),linear-gradient(#5c482b,#63502f)]">
    <svg className="ml-[11px] w-[39px] shrink-0" width="39" height="26" viewBox="0 0 39 26">
      <path d="M1 4.300L11.500 2.800v9.700H1zM12.600 2.600L27 .7v11.800H12.600zM1 13.500h10.500v9.700L1 21.700zM12.600 13.500H27v11.800l-14.400-2z" fill="#fff" />
    </svg>
    {TASKS.map((t, i) => (
      <div key={i} className={`flex h-[38px] shrink-0 items-center justify-center border ${t.cls}`}>{t.icon}</div>
    ))}
    <svg className="ml-auto shrink-0" width="136" height="20" viewBox="0 0 136 20">
      <path d="M1 13h7L4.500 9z" fill="#fff" />
      <path d="M22 5l4-2.500L29.500 5 33 2.500 37 5l-3.500 2.800L37 10.500 33 13l-3.500-2.500L26 13l-4-2.500 3.500-2.700zM25 14l4.500-3 4.500 3-4.500 3z" fill="#9dd4f6" stroke="#2585c6" strokeWidth=".7" />
      <circle cx="34" cy="14.500" r="4" fill="#2a9a35" /><path d="M32 14.500l1.500 2 2.500-4" stroke="#fff" strokeWidth="1.200" fill="none" />
      <path d="M47 3v14" stroke="#fff" strokeWidth="1.500" /><path d="M48 4h6v2h6l-1 5h-4V9h-7z" fill="#fff" />
      <path d="M72 3v4M75 3v4M70 7h6v3h-6zM73 10v8" stroke="#fff" strokeWidth="1.500" fill="#fff" /><path d="M79 5h5v12h-5zM80 3.500h3" fill="none" stroke="#fff" strokeWidth="1.500" />
      <path d="M95 15h2v2h-2zM98 13h2v4h-2zM101 10h2v7h-2zM104 7h2v10h-2z" fill="#fff" /><path d="M107 4h2v13h-2z" fill="#999" />
      <path d="M119 8h2l4-4v13l-4-4h-2z" fill="#fff" /><circle cx="128.500" cy="14" r="4" fill="#fff" stroke="#db2222" strokeWidth="1.800" /><path d="M126 11.500l5 5" stroke="#db2222" strokeWidth="1.500" />
    </svg>
    <div className="ml-[9px] mr-[6px] w-[68px] shrink-0 pb-[1px] pt-[3px] text-center text-[12px] leading-[17px] tracking-[-0.4px] text-white">
      <div className="tracking-[-0.5px]">12:53 PM</div>
      <div>10/2/2014</div>
    </div>
  </div>
);

export default function App() {
  return (
    <div className="flex h-[768px] w-[1366px] flex-col overflow-hidden font-['Open_Sans','Noto_Sans',sans-serif] leading-[normal]">
      <Scene />
      <Taskbar />
    </div>
  );
}
